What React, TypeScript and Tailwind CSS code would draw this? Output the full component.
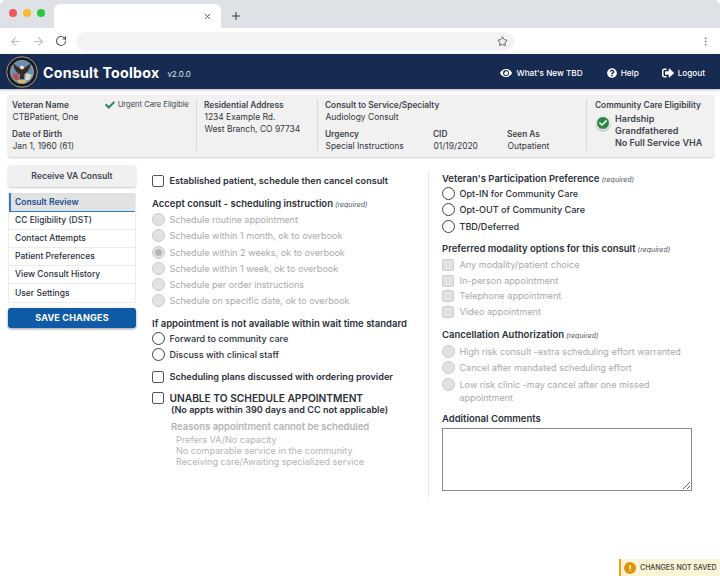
import React from 'react';
import { ArrowLeft, ArrowRight, RotateCw, Star, EllipsisVertical, X, Plus } from 'lucide-react';
import { FaEye, FaQuestionCircle, FaSignOutAlt, FaCheck } from 'react-icons/fa';

const Radio = ({ label, disabled, checked }: { label: string; disabled?: boolean; checked?: boolean }) => (
  <div className="flex items-start gap-[4.5px] min-h-[16.3px]">
    <span
      className={`mt-[1px] w-[13px] h-[13px] shrink-0 rounded-full border flex items-center justify-center ${
        disabled ? 'border-[#c8c8c8] bg-[#e2e2e2]' : 'border-[#3a3f48] border-[1.5px] bg-white'
      }`}
    >
      {checked && <span className="w-[7px] h-[7px] rounded-full bg-[#b4b4b4]" />}
    </span>
    <span className={`text-[9.05px] leading-[13px] mt-[1px] ${disabled ? 'text-[#a9a9a9]' : 'text-[#2b303a] font-medium'}`}>{label}</span>
  </div>
);

const Checkbox = ({ label, disabled, bold }: { label: string; disabled?: boolean; bold?: boolean }) => (
  <div className="flex items-start gap-[5.5px]">
    <span
      className={`mt-[1px] w-[12px] h-[12px] shrink-0 rounded-[2px] border ${
        disabled ? 'border-[#cccccc] bg-[#e2e2e2]' : 'border-[#50555e] border-[1.5px] bg-white'
      }`}
    />
    <span className={`text-[9.15px] leading-[14px] ${disabled ? 'text-[#a9a9a9]' : ''} ${bold ? 'font-semibold text-[#2b303a]' : ''}`}>{label}</span>
  </div>
);

const Heading = ({ text, required }: { text: string; required?: boolean }) => (
  <div className="text-[9.5px] leading-[14px] font-semibold text-[#2b303a]">
    {text}
    {required && <span className="ml-[2px] text-[7px] italic font-normal text-[#4a4f58]">(required)</span>}
  </div>
);

const InfoLabel = ({ children }: { children: React.ReactNode }) => (
  <div className="text-[8.3px] leading-[12px] font-semibold text-[#41464f]">{children}</div>
);

const InfoValue = ({ children }: { children: React.ReactNode }) => (
  <div className="ml-[0.5px] text-[8.45px] leading-[12px] text-[#33373f]">{children}</div>
);

const VaSeal = () => (
  <svg width="32" height="32" viewBox="0 0 32 32" className="shrink-0">
    <circle cx="16" cy="16" r="15.3" fill="#101c36" stroke="#b79a58" strokeWidth="1" />
    <circle cx="16" cy="16" r="11.6" fill="#6a8db5" stroke="#c9b078" strokeWidth="0.7" />
    {/* flags */}
    <path d="M6 19 L12 17 L13 24 L9 24 Z" fill="#b9504f" />
    <path d="M26 19 L20 17 L19 24 L23 24 Z" fill="#e0d9c8" />
    {/* eagle */}
    <path d="M15 13 C12 11 9 9 7 7 C8 12 10 17 14 18 L14 23 L18 23 L18 18 C22 17 24 12 25 7 C23 9 20 11 17 13 Z" fill="#3b2a20" />
    <circle cx="16" cy="11.5" r="1.9" fill="#ece6d4" />
    <path d="M11 24 L21 24 L19 27 L13 27 Z" fill="#d8b66c" />
  </svg>
);

const navItems = ['CC Eligibility (DST)', 'Contact Attempts', 'Patient Preferences', 'View Consult History', 'User Settings'];

export default function App() {
  return (
    <div className="relative h-[576px] w-[720px] overflow-hidden bg-white font-['Inter',sans-serif] text-[#2b303a]">
      {/* Browser chrome */}
      <div className="h-[28px] bg-[#dee1e6] flex items-end rounded-t-[6px]">
        <div className="flex items-center gap-[6px] pl-[9px] h-full pb-[2px] w-[54px]">
          <span className="w-[8px] h-[8px] rounded-full bg-[#f2575a]" />
          <span className="w-[8px] h-[8px] rounded-full bg-[#f7bd2f]" />
          <span className="w-[8px] h-[8px] rounded-full bg-[#2fc440]" />
        </div>
        <div className="w-[167px] h-[24px] bg-white rounded-t-[6px] flex items-center justify-end pr-[9px]">
          <X size={9} strokeWidth={2.4} className="text-[#444]" />
        </div>
        <div className="h-full flex items-center pl-[9px] pt-[3px]">
          <Plus size={12} strokeWidth={2} className="text-[#333]" />
        </div>
      </div>
      <div className="h-[26px] bg-white flex items-center pl-[9px] pr-[9px]">
        <ArrowLeft size={13} className="text-[#bcbfc4]" />
        <ArrowRight size={13} className="ml-[10px] text-[#bcbfc4]" />
        <RotateCw size={12} strokeWidth={2.2} className="ml-[10px] text-[#555]" />
        <div className="ml-[9px] h-[19px] w-[438px] rounded-full bg-[#f1f3f4] flex items-center justify-end pr-[6px]">
          <Star size={11} className="text-[#555]" />
        </div>
        <EllipsisVertical size={11} className="ml-auto text-[#777]" />
      </div>

      {/* App header */}
      <div className="h-[35px] bg-[#172b52] flex items-center pl-[6px] pr-[15px] text-white shadow-[0_1px_2px_rgba(0,0,0,0.3)]">
        <VaSeal />
        <span className="ml-[5px] mt-[3px] text-[14.2px] font-bold tracking-[0.25px]">Consult Toolbox</span>
        <span className="ml-[8px] mt-[5px] text-[8px] text-[#dfe3ea]">v2.0.0</span>
        <div className="ml-auto flex items-center text-[8.2px] font-medium mt-[4px]">
          <FaEye size={12} />
          <span className="ml-[4px]">What's New TBD</span>
          <FaQuestionCircle size={10} className="ml-[24px]" />
          <span className="ml-[4px]">Help</span>
          <FaSignOutAlt size={12} className="ml-[23px]" />
          <span className="ml-[4px]">Logout</span>
        </div>
      </div>

      {/* Veteran info bar */}
      <div className="ml-[8px] mr-[6px] mt-[6px] h-[62px] bg-[#f1f1f1] rounded-[3px] shadow-[0_1px_2px_rgba(0,0,0,0.2)] flex py-[4px]">
        <div className="w-[189px] pl-[4px] border-r border-[#d8d8d8] pr-[7px] h-[52px]">
          <div className="flex justify-between">
            <InfoLabel>Veteran Name</InfoLabel>
            <div className="flex items-center gap-[3px] text-[7.6px] leading-[12px] text-[#41464f]">
              <FaCheck size={10} className="text-[#2e7d4f]" />
              Urgent Care Eligible
            </div>
          </div>
          <InfoValue>CTBPatient, One</InfoValue>
          <div className="mt-[5px]"><InfoLabel>Date of Birth</InfoLabel></div>
          <InfoValue>Jan 1, 1960 (61)</InfoValue>
        </div>
        <div className="w-[121px] pl-[7px] border-r border-[#d8d8d8] h-[52px]">
          <InfoLabel>Residential Address</InfoLabel>
          <InfoValue>1234 Example Rd.</InfoValue>
          <InfoValue>West Branch, CO 97734</InfoValue>
        </div>
        <div className="w-[269px] pl-[7px] border-r border-[#d8d8d8] h-[52px]">
          <InfoLabel>Consult to Service/Specialty</InfoLabel>
          <InfoValue>Audiology Consult</InfoValue>
          <div className="mt-[5px] flex">
            <div className="w-[108px]">
              <InfoLabel>Urgency</InfoLabel>
              <InfoValue>Special Instructions</InfoValue>
            </div>
            <div className="w-[74px]">
              <InfoLabel>CID</InfoLabel>
              <InfoValue>01/19/2020</InfoValue>
            </div>
            <div>
              <InfoLabel>Seen As</InfoLabel>
              <InfoValue>Outpatient</InfoValue>
            </div>
          </div>
        </div>
        <div className="pl-[8px]">
          <InfoLabel>Community Care Eligibility</InfoLabel>
          <div className="flex mt-[2px]">
            <span className="mt-[3px] ml-[1px] w-[14px] h-[14px] rounded-full bg-[#2e8540] border border-white shadow-[0_1px_2px_rgba(0,0,0,0.3)] flex items-center justify-center">
              <FaCheck size={8} className="text-white" />
            </span>
            <div className="ml-[5px] text-[9px] leading-[12px] font-semibold text-[#41464f]">
              <div>Hardship</div>
              <div>Grandfathered</div>
              <div>No Full Service VHA</div>
            </div>
          </div>
        </div>
      </div>

      {/* Main content */}
      <div className="flex mt-[8px]">
        <div className="ml-[8px] w-[128px] shrink-0">
          <div className="h-[22px] bg-[#f0f0f0] rounded-[3px] shadow-[0_1px_2px_rgba(0,0,0,0.2)] flex items-center justify-center text-[8.6px] font-semibold text-[#41464f]">
            Receive VA Consult
          </div>
          <div className="mt-[6px] border border-[#ececec] border-t-0">
            <div className="h-[19px] bg-[#e0e2e4] border-l-2 border-b border-[#2e7fc4] flex items-center pl-[4px] text-[8.5px] font-semibold text-[#1d4a8a]">
              Consult Review
            </div>
            {navItems.map((item) => (
              <div key={item} className="h-[18px] border-b border-[#ececec] last:border-b-0 flex items-center pl-[6px] text-[8.5px] font-medium text-[#2b303a]">
                {item}
              </div>
            ))}
          </div>
          <div className="mt-[5px] h-[20px] bg-[#0f5ba7] rounded-[3px] shadow-[0_1px_3px_rgba(0,0,0,0.4)] flex items-center justify-center text-[9px] font-bold tracking-[0.2px] text-white">
            SAVE CHANGES
          </div>
        </div>

        <div className="ml-[16px] w-[261px] shrink-0 pt-[9px]">
          <Checkbox label="Established patient, schedule then cancel consult" bold />
          <div className="mt-[9px]"><Heading text="Accept consult - scheduling instruction" required /></div>
          <div>
            <Radio disabled label="Schedule routine appointment" />
            <Radio disabled label="Schedule within 1 month, ok to overbook" />
            <Radio disabled checked label="Schedule within 2 weeks, ok to overbook" />
            <Radio disabled label="Schedule within 1 week, ok to overbook" />
            <Radio disabled label="Schedule per order instructions" />
            <Radio disabled label="Schedule on specific date, ok to overbook" />
          </div>
          <div className="mt-[7px]"><Heading text="If appointment is not available within wait time standard" /></div>
          <div>
            <Radio label="Forward to community care" />
            <Radio label="Discuss with clinical staff" />
          </div>
          <div className="mt-[7px]"><Checkbox label="Scheduling plans discussed with ordering provider" bold /></div>
          <div className="mt-[7px] [&_span:last-child]:text-[10.2px]"><Checkbox label="UNABLE TO SCHEDULE APPOINTMENT" bold /></div>
          <div className="ml-[19px] -mt-[1px] text-[9.1px] leading-[12px] font-semibold text-[#2b303a]">(No appts within 390 days and CC not applicable)</div>
          <div className="ml-[19px] mt-[4px] text-[9.5px] leading-[13px] font-semibold text-[#b3b3b3]">Reasons appointment cannot be scheduled</div>
          <div className="ml-[24px] mt-[1px] text-[9.1px] leading-[11px] text-[#b3b3b3]">
            <div>Prefers VA/No capacity</div>
            <div>No comparable service in the community</div>
            <div>Receiving care/Awaiting specialized service</div>
          </div>
        </div>

        <div className="ml-[15px] mt-[7px] h-[325px] w-[1px] bg-[#e4e4e4] shrink-0" />

        <div className="ml-[13px] w-[250px] shrink-0 pt-[7px]">
          <Heading text="Veteran's Participation Preference" required />
          <div className="-mt-[1px]">
            <Radio label="Opt-IN for Community Care" />
            <Radio label="Opt-OUT of Community Care" />
            <Radio label="TBD/Deferred" />
          </div>
          <div className="mt-[7px]"><Heading text="Preferred modality options for this consult" required /></div>
          <div className="mt-[1px] flex flex-col gap-[1.7px]">
            <Checkbox disabled label="Any modality/patient choice" />
            <Checkbox disabled label="In-person appointment" />
            <Checkbox disabled label="Telephone appointment" />
            <Checkbox disabled label="Video appointment" />
          </div>
          <div className="mt-[9px]"><Heading text="Cancellation Authorization" required /></div>
          <div className="mt-[1px]">
            <Radio disabled label="High risk consult -extra scheduling effort warranted" />
            <Radio disabled label="Cancel after mandated scheduling effort" />
            <Radio disabled label="Low risk clinic -may cancel after one missed appointment" />
          </div>
          <div className="mt-[8px]"><Heading text="Additional Comments" /></div>
          <textarea className="block mt-[2px] w-[250px] h-[63px] border border-[#8a8a8a] bg-white outline-none" />
        </div>
      </div>

      {/* Unsaved toast */}
      <div className="absolute right-0 bottom-0 w-[101px] h-[17px] bg-[#fdf3d6] border-l-2 border-[#f0a30a] flex items-center pl-[3px]">
        <span className="w-[12px] h-[12px] rounded-full bg-[#e0930c] flex items-center justify-center text-[8px] leading-none font-bold text-white">!</span>
        <span className="ml-[4px] mt-[1px] text-[7px] font-medium text-[#3a3a3a]">CHANGES NOT SAVED</span>
      </div>
    </div>
  );
}
